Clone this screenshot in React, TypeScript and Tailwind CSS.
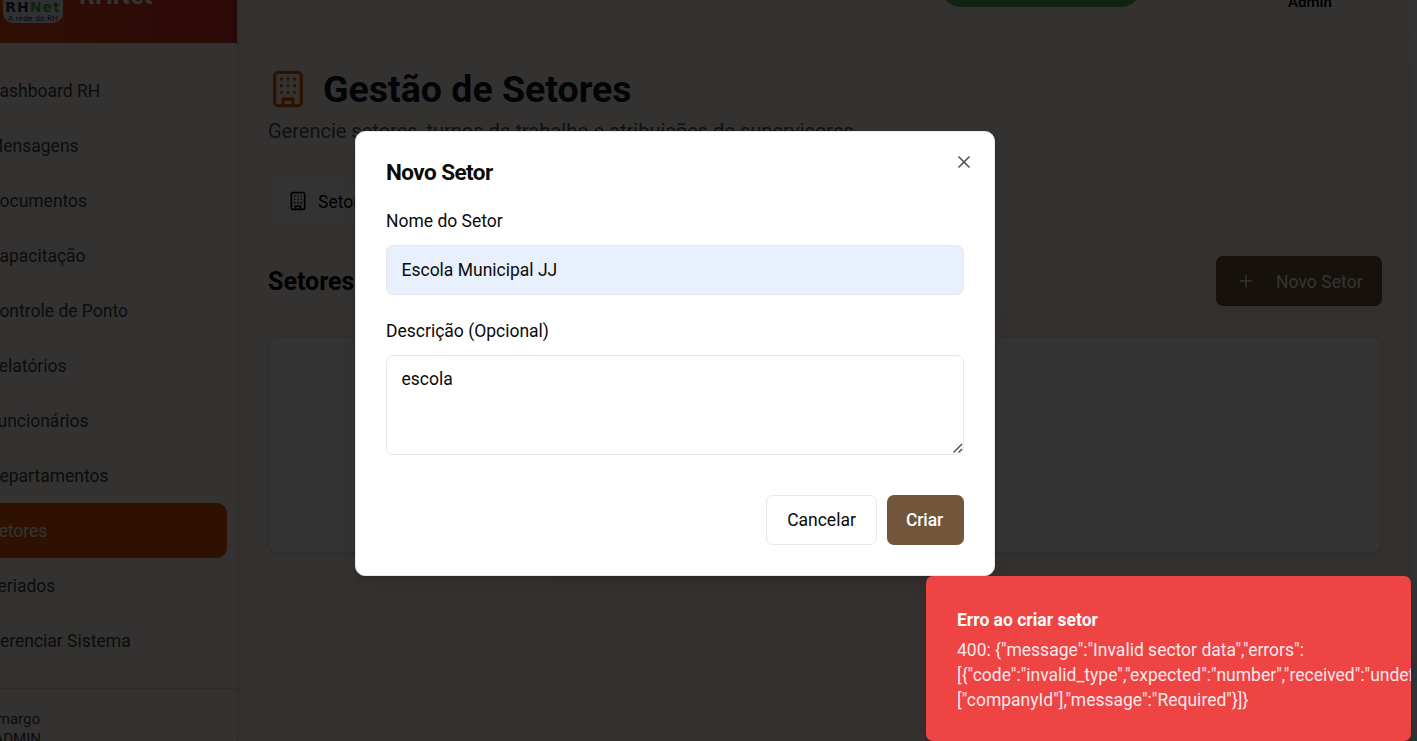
import React from "react";
import { Plus, X } from "lucide-react";

const navItems = [
  "Dashboard RH",
  "Mensagens",
  "Documentos",
  "Capacitação",
  "Controle de Ponto",
  "Relatórios",
  "Funcionários",
  "Departamentos",
  "Setores",
  "Feriados",
  "Gerenciar Sistema",
];

function BuildingIcon({ className }: { className: string }) {
  return (
    <svg
      className={className}
      viewBox="0 0 24 24"
      fill="none"
      stroke="currentColor"
      strokeWidth="2"
      strokeLinecap="round"
      strokeLinejoin="round"
    >
      <rect width="16" height="20" x="4" y="2" rx="2" ry="2" />
      <path d="M9 22v-4h6v4" />
      <path d="M8 6h.01M16 6h.01M12 6h.01M12 10h.01M12 14h.01M16 10h.01M16 14h.01M8 10h.01M8 14h.01" />
    </svg>
  );
}

function Sidebar() {
  return (
    <aside className="-ml-[82px] flex w-[320px] shrink-0 flex-col border-r border-[#fed7aa] bg-[#fff8ef] shadow-lg">
      <div className="flex h-[43px] shrink-0 items-start bg-gradient-to-r from-[#ea580c] to-[#dc2626] pl-[85px]">
        <div className="-mt-[37px] flex h-[60px] w-[60px] flex-col items-center justify-end rounded-[10px] bg-[#f5f5f5] font-['DejaVu_Sans',sans-serif]">
          <div className="text-[14px] leading-[14px] font-bold tracking-[1px] whitespace-nowrap text-[#17306b]">
            RH<span className="text-[#4fae32]">Net</span>
          </div>
          <div className="mt-px pb-px text-[7.6px] leading-[7px] whitespace-nowrap text-[#17306b]">A rede do RH</div>
        </div>
        <div className="-mt-[20px] ml-4 text-[25px] leading-[32px] font-bold text-white">RHNet</div>
      </div>
      <nav className="flex flex-col px-[10px] pt-[20px]">
        {navItems.map((item) => (
          <div
            key={item}
            className={
              item === "Setores"
                ? "flex h-[55px] items-center rounded-[10px] bg-[#ea580c] pt-[2px] pl-[60px] text-white"
                : "flex h-[55px] items-center rounded-[10px] pt-[2px] pl-[60px] text-gray-700"
            }
          >
            {item}
          </div>
        ))}
      </nav>
      <div className="mt-5 flex grow flex-col border-t border-[#fed7aa] pt-[20px] pl-[20px] text-[15px] leading-5 text-gray-700">
        <div className="w-[102px] text-right">Camargo</div>
        <div className="w-[103px] text-right">ADMIN</div>
      </div>
    </aside>
  );
}

function Main() {
  return (
    <main className="flex min-w-0 grow flex-col">
      <header className="flex h-[36px] shrink-0 items-start border-b border-gray-200 bg-[#fffaf4] pl-[703px]">
        <div className="-mt-[33px] h-10 w-[200px] rounded-full bg-[#4caf50]" />
        <div className="-mt-[8px] ml-[147px] text-[15px] leading-5 font-semibold text-black">Admin</div>
      </header>
      <div className="flex flex-col pt-[30px] pr-[30px] pl-[30px]">
        <div className="flex h-[45px] items-center gap-[15px]">
          <BuildingIcon className="size-10 text-[#ea580c]" />
          <h1 className="pt-[2px] text-[37.5px] leading-[45px] font-bold text-gray-900">Gestão de Setores</h1>
        </div>
        <p className="mt-[5px] text-[20px] leading-[30px] text-gray-600">
          Gerencie setores, turnos de trabalho e atribuições de supervisores.
        </p>
        <div className="mt-[35px] ml-[5px] flex h-10 w-[200px] items-center gap-[10px] rounded-[5px] bg-white pl-[15px] text-black">
          <BuildingIcon className="size-5" />
          <span className="pt-[2px]">Setores</span>
        </div>
        <div className="mt-[35px] flex h-[50px] items-center justify-between">
          <h2 className="pt-px text-[25px] leading-[35px] font-bold text-black">Setores</h2>
          <div className="flex h-[50px] w-[166px] items-center rounded-[7px] bg-[#73553c] pl-5 text-white">
            <Plus className="size-5" strokeWidth={1.7} />
            <span className="ml-5 pt-[2px] tracking-[0.05px]">Novo Setor</span>
          </div>
        </div>
        <div className="mt-[30px] h-[217px] rounded-[10px] border border-gray-200 bg-white shadow-sm" />
      </div>
    </main>
  );
}

function SectorDialog() {
  return (
    <div className="absolute top-[131px] left-[355px] flex h-[445px] w-[640px] flex-col rounded-[10px] border border-gray-200 bg-white px-[30px] pt-[29px] text-[#0c0a09] shadow-lg">
      <h2 className="text-[22.5px] leading-[23px] font-bold tracking-[-0.55px]">Novo Setor</h2>
      <X className="absolute top-[20px] right-[20px] size-5 opacity-70" strokeWidth={2} />
      <div className="mt-[25px] h-[25px] leading-[25px]">Nome do Setor</div>
      <div className="mt-[11px] flex h-[50px] items-center rounded-[7px] border border-gray-200 bg-[#e8f0fe] pl-[14.5px]">
        Escola Municipal JJ
      </div>
      <div className="mt-[24px] h-[25px] leading-[25px]">Descrição (Opcional)</div>
      <div className="relative mt-[11px] h-[100px]">
        <textarea
          readOnly
          value="escola"
          className="block h-[100px] w-full resize-none rounded-[7px] border border-gray-200 px-[14.5px] py-[11px] leading-[25px] outline-none"
        />
        <svg
          className="absolute right-[1px] bottom-[2px] size-[10px]"
          viewBox="0 0 10 10"
          fill="none"
          stroke="#444"
          strokeWidth="1.4"
        >
          <path d="M0.5 9.5L9 1M5.5 9.5L9 6" />
        </svg>
      </div>
      <div className="mt-10 flex justify-end gap-[10px]">
        <button className="h-[50px] w-[111px] rounded-[7px] border border-gray-200">Cancelar</button>
        <button className="h-[50px] w-[77px] rounded-[7px] bg-[#73553c] pr-[8px] pl-[6px] font-medium tracking-[-0.1px] text-gray-50">
          Criar
        </button>
      </div>
    </div>
  );
}

function ErrorToast() {
  return (
    <div className="absolute top-[576px] left-[926px] h-[165px] w-[485px] overflow-hidden rounded-[7px] bg-[#ef4444] pt-[32px] pl-[31px] leading-[25px] text-gray-50 shadow-lg">
      <div className="font-bold">Erro ao criar setor</div>
      <div className="mt-[5px] whitespace-nowrap opacity-90">
        <div>{'400: {"message":"Invalid sector data","errors":'}</div>
        <div>{'[{"code":"invalid_type","expected":"number","received":"undefined","path":'}</div>
        <div>{'["companyId"],"message":"Required"}]}'}</div>
      </div>
    </div>
  );
}

export default function App() {
  return (
    <div className="relative h-[741px] w-[1417px] overflow-hidden bg-white font-[Roboto,sans-serif] text-[17.5px] leading-[25px]">
      <div className="flex h-full w-[1412px] bg-[linear-gradient(149deg,#fff8ef_0%,#fff8ef_57%,#fff0eb_59%,#fff0eb_66%,#fff0e3_69%,#fff0e3_100%)]">
        <Sidebar />
        <Main />
      </div>
      <div className="absolute inset-0 bg-black/80" />
      <SectorDialog />
      <ErrorToast />
    </div>
  );
}
